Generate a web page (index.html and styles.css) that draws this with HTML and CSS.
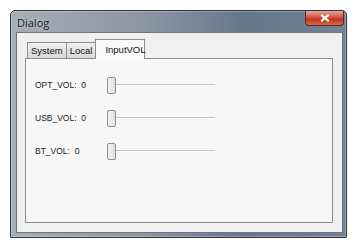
FILE: index.html
```html
<!DOCTYPE html>
<html lang="en">
<head>
    <meta charset="UTF-8">
    <title>Dialog</title>
    <link rel="stylesheet" href="styles.css">
</head>
<body>
    <div class="window">
        <div class="titlebar">
            <span class="title">Dialog</span>
            <div class="close">
                <svg width="10" height="8" viewBox="0 0 10 8">
                    <path d="M2 1.5 L8 6.5 M8 1.5 L2 6.5" stroke="#fff" stroke-width="2" stroke-linecap="square"/>
                </svg>
            </div>
        </div>
        <div class="client">
            <div class="tabs">
                <div class="tab">System</div>
                <div class="tab">Local</div>
                <div class="tab active">InputVOL</div>
            </div>
            <div class="pane">
                <div class="row">
                    <span class="label">OPT_VOL:&nbsp; 0</span>
                    <div class="slider"><div class="handle"></div><div class="track"></div></div>
                </div>
                <div class="row">
                    <span class="label">USB_VOL:&nbsp; 0</span>
                    <div class="slider"><div class="handle"></div><div class="track"></div></div>
                </div>
                <div class="row">
                    <span class="label">BT_VOL:&nbsp; 0</span>
                    <div class="slider"><div class="handle"></div><div class="track"></div></div>
                </div>
            </div>
        </div>
    </div>
</body>
</html>
```

FILE: styles.css
```css
body {
    margin: 0;
    background-color: #fff;
    font-family: "Liberation Sans", Arial, sans-serif;
}
.window {
    margin: 10px 0 0 10px;
    width: 335px;
    height: 226px;
    border: 1px solid #33373d;
    border-radius: 5px 5px 1px 1px;
    background: linear-gradient(to right, #a4adb8, #8b96a3 40%, #66768a 70%, #738295);
    display: flex;
    flex-direction: column;
    box-shadow: inset 0 0 0 1px rgba(255,255,255,0.25);
}
.titlebar {
    height: 21px;
    display: flex;
    justify-content: space-between;
    align-items: flex-start;
}
.title {
    font-family: "Open Sans", "Liberation Sans", sans-serif;
    font-size: 11px;
    color: #15181d;
    margin: 4px 0 0 6px;
    text-shadow: 0 0 4px rgba(255,255,255,0.6);
}
.close {
    width: 39px;
    height: 15px;
    margin-right: 2px;
    border: 1px solid #5a2a28;
    border-top: none;
    border-radius: 0 0 4px 4px;
    background: linear-gradient(to bottom, #e8a59a, #d2563f 45%, #c2341c 60%, #d86a4e);
    display: flex;
    align-items: center;
    justify-content: center;
    box-sizing: border-box;
}
.client {
    flex: 1;
    margin: 0 3px 4px 5px;
    border: 1px solid #6d7680;
    background-color: #f0f0f0;
    padding: 7px 9px 9px 8px;
    display: flex;
    flex-direction: column;
}
.tabs {
    display: flex;
    align-items: flex-end;
    padding-left: 2px;
    height: 18px;
}
.tab {
    height: 15px;
    padding: 0 3px;
    border: 1px solid #8c8e94;
    border-bottom: none;
    margin-right: -1px;
    background: linear-gradient(to bottom, #f2f2f2, #e3e3e3 50%, #d9d9d9);
    font-size: 9.5px;
    line-height: 15px;
    color: #111;
}
.tab.active {
    height: 17px;
    padding: 2px 5px 0 9px;
    background-color: #f9f9f9;
    background-image: none;
    position: relative;
    z-index: 1;
    margin-bottom: -1px;
    width: 34px;
}
.pane {
    flex: 1;
    border: 1px solid #8c8e94;
    background-color: #f7f7f7;
    padding: 18px 0 0 9px;
    display: flex;
    flex-direction: column;
    gap: 17px;
}
.row {
    display: flex;
    align-items: center;
    height: 16px;
}
.label {
    width: 72px;
    font-size: 8.5px;
    color: #222;
}
.slider {
    display: flex;
    align-items: center;
    width: 108px;
}
.handle {
    width: 7px;
    height: 15px;
    border: 1px solid #8f8f8f;
    border-radius: 2px;
    background: linear-gradient(to right, #f4f4f4, #e0e0e0);
}
.track {
    flex: 1;
    height: 1px;
    background-color: #c4c4c4;
    border-bottom: 1px solid #fff;
}
```
